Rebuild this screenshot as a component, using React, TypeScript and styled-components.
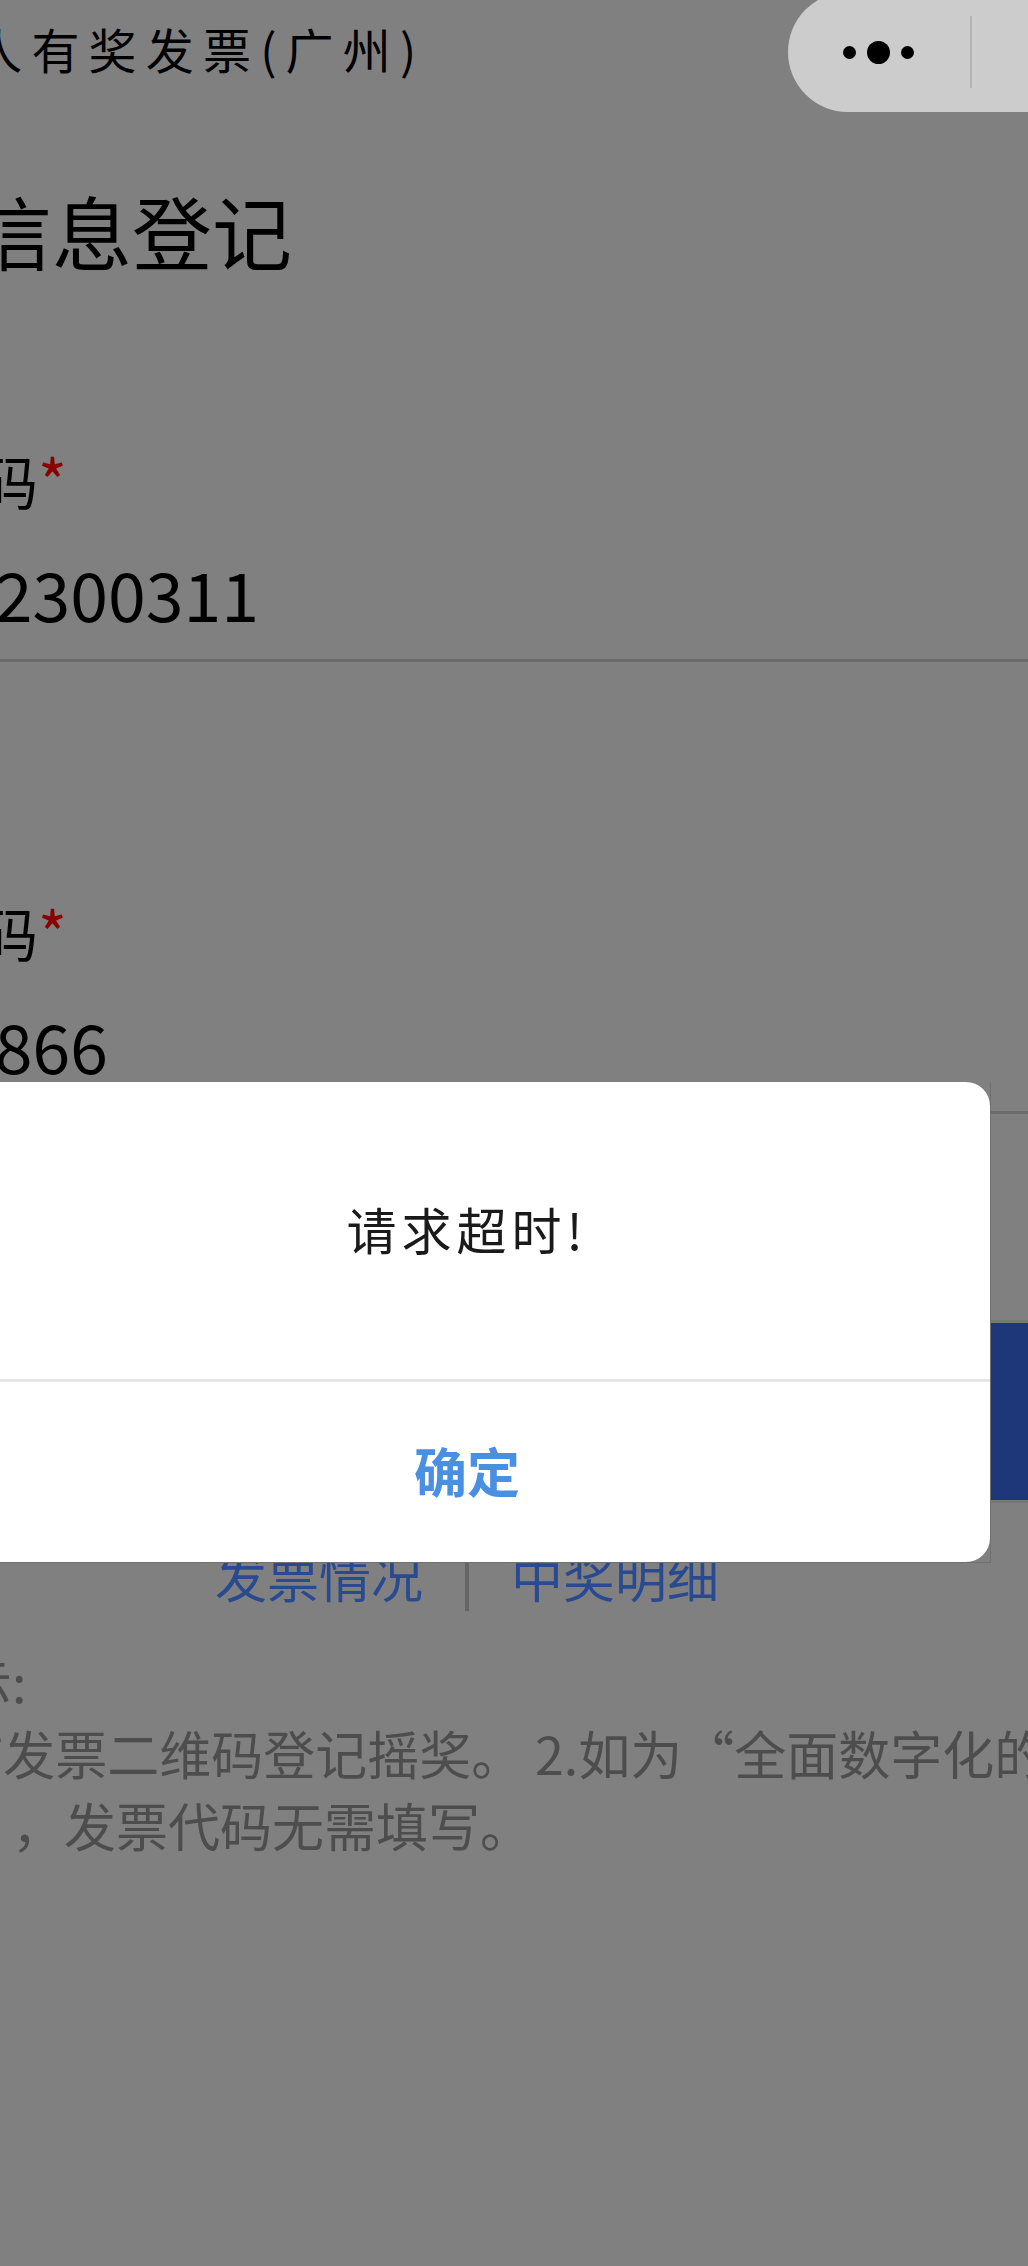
import React from "react";
import styled, { createGlobalStyle } from "styled-components";

const GlobalStyle = createGlobalStyle`
  html, body {
    margin: 0;
    padding: 0;
    background: #808080;
  }
  * {
    box-sizing: border-box;
  }
`;

const fontStack = `"Noto Sans CJK SC", "Noto Sans", sans-serif`;

const fields = [
  { label: "发票代码", value: "144032300311" },
  { label: "发票号码", value: "12345866" },
];

export default function App() {
  return (
    <>
      <GlobalStyle />
      <Screen>
        <Sheet>
          <NavBar>
            <NavTitle>个人有奖发票(广州)</NavTitle>
          </NavBar>
          <Heading>发票信息登记</Heading>
          <FieldList>
            {fields.map((field) => (
              <Field key={field.label}>
                <Label>
                  {field.label}
                  <Star>*</Star>
                </Label>
                <Value>{field.value}</Value>
              </Field>
            ))}
          </FieldList>
          <SubmitButton />
          <Links>
            <LinkText>发票情况</LinkText>
            <LinkDivider />
            <LinkText>中奖明细</LinkText>
          </Links>
          <Notes>
            <NoteLine>温馨提示:</NoteLine>
            <NoteLine>1.请扫描发票二维码登记摇奖。 2.如为“全面数字化的电</NoteLine>
            <NoteLine>子发票”，发票代码无需填写。</NoteLine>
          </Notes>
        </Sheet>
        <Overlay>
          <DialogFrame>
            <Dialog>
              <DialogBody>请求超时!</DialogBody>
              <DialogAction>确定</DialogAction>
            </Dialog>
          </DialogFrame>
        </Overlay>
        <Capsule>
          <Dots>
            <Dot $size={13} />
            <Dot $size={23} />
            <Dot $size={13} />
          </Dots>
          <CapsuleDivider />
        </Capsule>
      </Screen>
    </>
  );
}

const Screen = styled.div`
  position: relative;
  width: 1028px;
  height: 2266px;
  overflow: hidden;
  background: #808080;
  font-family: ${fontStack};
  color: #000;
`;

const Sheet = styled.div`
  width: 1170px;
  margin-left: -118px;
`;

const NavBar = styled.div`
  height: 112px;
  display: flex;
  align-items: center;
  padding-left: 35px;
`;

const NavTitle = styled.div`
  font-size: 48px;
  line-height: 60px;
  letter-spacing: 9.2px;
  white-space: nowrap;
  margin-top: -16px;
`;

const Heading = styled.h1`
  margin: 67px 0 0 -70px;
  font-size: 80px;
  font-weight: 400;
  line-height: 100px;
  white-space: nowrap;
`;

const FieldList = styled.div`
  margin-top: 171px;
  margin-left: -76px;
  width: 1400px;
  display: flex;
  flex-direction: column;
  gap: 240px;
`;

const Field = styled.div`
  display: flex;
  flex-direction: column;
`;

const Label = styled.div`
  font-size: 58px;
  line-height: 60px;
  white-space: nowrap;
`;

const Star = styled.span`
  color: #8b0000;
  font-size: 62px;
  line-height: 0;
  vertical-align: -1px;
`;

const Value = styled.div`
  margin-top: 43px;
  height: 109px;
  font-size: 68px;
  line-height: 80px;
  border-bottom: 3px solid #6b6b6b;
  white-space: nowrap;
`;

const SubmitButton = styled.div`
  margin: 206px 0 0 -100px;
  width: 1400px;
  height: 183px;
  background: #1e3778;
  border: 3px solid #777;
`;

const Links = styled.div`
  margin-top: 42px;
  display: flex;
  justify-content: center;
  align-items: center;
  gap: 42px;
`;

const LinkText = styled.span`
  font-size: 52px;
  line-height: 57px;
  padding-bottom: 5px;
  color: #2a4a90;
`;

const LinkDivider = styled.span`
  width: 4px;
  height: 66px;
  background: #666;
`;

const Notes = styled.div`
  margin: 34px 0 0 -78px;
  color: #4d4d4d;
  font-size: 52px;
  line-height: 72px;
  text-spacing-trim: space-all;
`;

const NoteLine = styled.div`
  white-space: nowrap;
`;

const Overlay = styled.div`
  position: absolute;
  inset: 0;
  padding-top: 1082px;
`;

const DialogFrame = styled.div`
  width: 1047px;
  height: 481px;
  margin-left: -56px;
  border-right: 1px solid #707070;
  border-bottom: 1px solid #707070;
`;

const Dialog = styled.div`
  height: 100%;
  background: #fff;
  border-radius: 24px;
  display: flex;
  flex-direction: column;
`;

const DialogBody = styled.div`
  height: 300px;
  padding-bottom: 6px;
  display: flex;
  align-items: center;
  justify-content: center;
  font-size: 50px;
  letter-spacing: 5px;
  color: #1a1a1a;
  border-bottom: 3px solid #e5e5e5;
`;

const DialogAction = styled.div`
  flex: 1;
  padding-bottom: 4px;
  display: flex;
  align-items: center;
  justify-content: center;
  font-size: 53px;
  font-weight: 700;
  color: #4a90e2;
`;

const Capsule = styled.div`
  position: absolute;
  top: -8px;
  left: 788px;
  width: 300px;
  height: 120px;
  border-radius: 60px;
  background: #ccc;
  display: flex;
  align-items: center;
`;

const Dots = styled.div`
  margin-left: 55px;
  width: 71px;
  display: flex;
  align-items: center;
  justify-content: space-between;
`;

const Dot = styled.span<{ $size: number }>`
  width: ${({ $size }) => $size}px;
  height: ${({ $size }) => $size}px;
  border-radius: 50%;
  background: #000;
`;

const CapsuleDivider = styled.span`
  margin-left: 56px;
  width: 2px;
  height: 72px;
  background: #b3b3b3;
`;
